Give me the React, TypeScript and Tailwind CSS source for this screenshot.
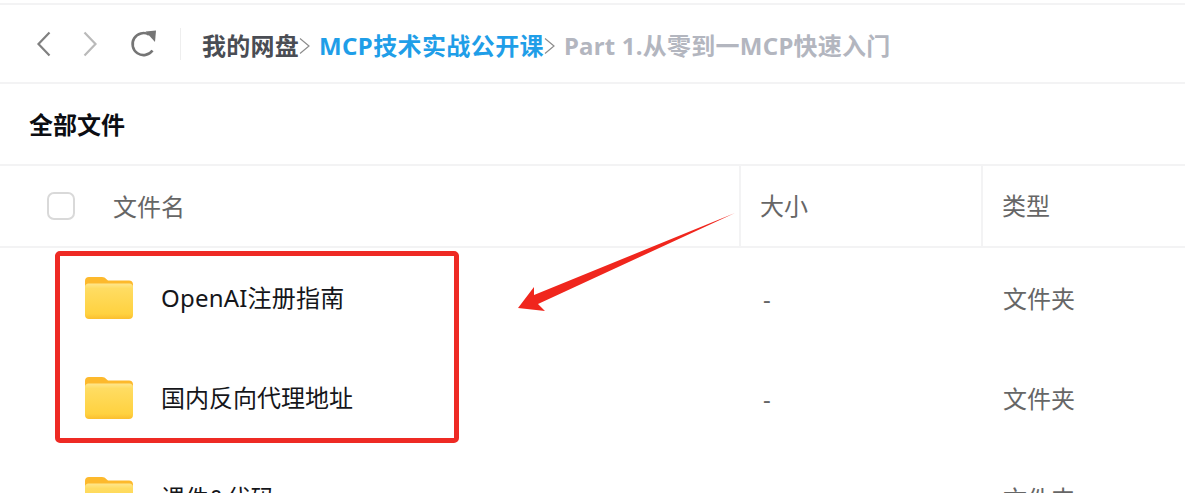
const font = "font-['Noto_Sans','Noto_Sans_CJK_SC',sans-serif]";

const rows = [
  { name: 'OpenAI注册指南', nameClass: 'tracking-[0.2px]' },
  { name: '国内反向代理地址', nameClass: '' },
  { name: '课件&代码', nameClass: '' },
];

function Folder() {
  return (
    <svg width="50" height="44" viewBox="0 0 50 44" className="shrink-0">
      <defs>
        <linearGradient id="folderFront" x1="0" y1="0" x2="0" y2="1">
          <stop offset="0" stopColor="#ffe68c" />
          <stop offset="0.14" stopColor="#ffdc62" />
          <stop offset="0.85" stopColor="#ffd240" />
          <stop offset="1" stopColor="#fbbf2e" />
        </linearGradient>
      </defs>
      <path
        d="M1 5c0-2.500 1.500-4 4-4h13c2 0 3 .7 4.500 2.200L24 4.500h21c2.500 0 4 1.500 4 4V20H1z"
        fill="#fdb92c"
      />
      <path
        d="M1 11c0-2 1.500-3.500 3.500-3.500h41c2 0 3.500 1.500 3.500 3.500v28c0 2.500-1.500 4-4 4H5c-2.500 0-4-1.500-4-4z"
        fill="url(#folderFront)"
      />
    </svg>
  );
}

function Chevron({ right, color }: { right?: boolean; color: string }) {
  return (
    <svg width="16" height="28" viewBox="0 0 16 28" fill="none" stroke={color} strokeWidth="2.200">
      <path d={right ? 'M1.500 2.500 12.500 14 1.500 25.500' : 'M13.500 2.500 2.500 14 13.500 25.500'} />
    </svg>
  );
}

function CrumbSeparator() {
  return (
    <svg width="12" height="22" viewBox="0 0 12 22" fill="none" stroke="#8c8c8c" strokeWidth="1.200" className="shrink-0">
      <path d="M1 3.500 10 11 1 18.500" />
    </svg>
  );
}

function HeaderCell({ label, className }: { label: string; className: string }) {
  return (
    <div className={`flex h-full items-center border-l-2 border-[#f3f3f4] pl-[19px] text-[#666666] ${className}`}>
      {label}
    </div>
  );
}

export default function App() {
  return (
    <div className={`relative h-[493px] w-[1185px] overflow-hidden bg-white text-[24px] ${font}`}>
      <div className="h-[5px] border-b-2 border-[#f3f3f4]" />

      {/* toolbar */}
      <div className="flex h-[79px] items-center border-b-2 border-[#f3f3f4] pl-[36px]">
        <Chevron color="#808080" />
        <div className="ml-[31px]">
          <Chevron right color="#bababa" />
        </div>
        <svg width="30" height="30" viewBox="0 0 30 30" className="ml-[30px]">
          <path d="M23.500 21.500A11 11 0 1 1 20 5.500" fill="none" stroke="#757575" strokeWidth="2.600" />
          <path d="M16.500 2.500 27 1.500 26 13z" fill="#757575" />
        </svg>
        <div className="ml-[21px] h-[32px] w-px bg-[#eeeeee]" />
        <div className="ml-[21px] flex items-center pt-[5px] font-bold tracking-[0.25px]">
          <span className="text-[#4a4d54]">我的网盘</span>
          <CrumbSeparator />
          <span className="ml-[8px] tracking-[0.4px] text-[#1f9ee8]">MCP技术实战公开课</span>
          <CrumbSeparator />
          <span className="ml-[8px] text-[#b3b6bf]">Part 1.从零到一MCP快速入门</span>
        </div>
      </div>

      {/* title */}
      <div className="flex h-[82px] items-center border-b-2 border-[#f3f3f4] pl-[29px] pt-[1px] font-bold text-[#0c0d12]">
        全部文件
      </div>

      {/* table header */}
      <div className="flex h-[82px] items-center border-b-2 border-[#f3f3f4]">
        <div className="flex w-[739px] items-center pl-[47px] text-[#666666]">
          <div className="h-[28px] w-[28px] rounded-[7px] border-2 border-[#d9d9d9]" />
          <span className="ml-[38px] pt-[2px]">文件名</span>
        </div>
        <HeaderCell label="大小" className="w-[242px]" />
        <HeaderCell label="类型" className="flex-1" />
      </div>

      {/* rows */}
      {rows.map((row) => (
        <div key={row.name} className="flex h-[100px] items-center">
          <div className="flex w-[741px] items-center pl-[84px] text-[#15161a]">
            <Folder />
            <span className={`ml-[27px] ${row.nameClass}`}>{row.name}</span>
          </div>
          <div className="w-[242px] pl-[22px] pt-[2px] text-[#666666]">-</div>
          <div className="pl-[20px] pt-[2px] text-[#666666]">文件夹</div>
        </div>
      ))}

      {/* annotation */}
      <div className="absolute left-[55px] top-[251px] h-[192px] w-[404px] rounded-[5px] border-[5px] border-[#ee2a24]" />
      <svg width="230" height="110" viewBox="0 0 230 110" className="absolute left-[510px] top-[205px]">
        <path d="M225 8 28 99 35 106 8 103 24 82 24 90z" fill="#f0261d" />
      </svg>
    </div>
  );
}
